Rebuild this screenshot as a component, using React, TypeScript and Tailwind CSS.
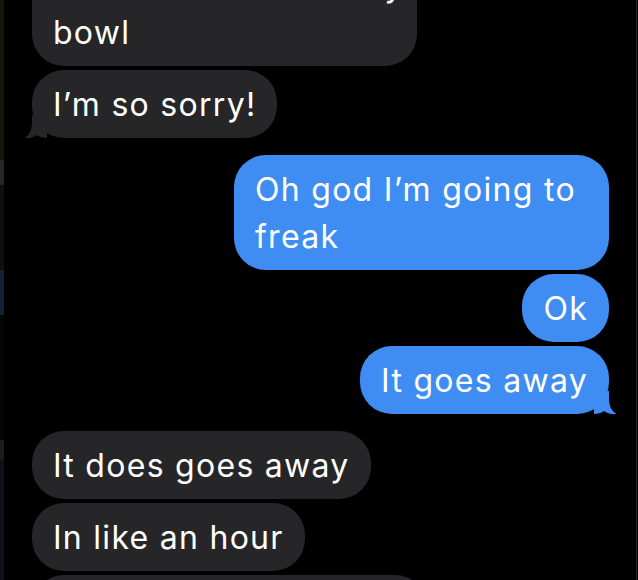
import type { ReactNode } from 'react'

type Side = 'in' | 'out'

interface Msg {
  side: Side
  text: ReactNode
  tail?: boolean
  width?: string
}

const messages: Msg[] = [
  {
    side: 'in',
    text: <><span className="whitespace-nowrap">Mine did that with my</span><br />bowl</>,
    width: 'w-[385px] max-w-none',
  },
  { side: 'in', text: 'I’m so sorry!', tail: true },
  { side: 'out', text: 'Oh god I’m going to freak' },
  { side: 'out', text: 'Ok' },
  { side: 'out', text: 'It goes away', tail: true },
  { side: 'in', text: 'It does goes away' },
  { side: 'in', text: 'In like an hour' },
  { side: 'in', text: 'Sometimes a bit longer', width: 'w-[395px] max-w-none' },
]

function Tail({ side }: { side: Side }) {
  const fill = side === 'out' ? '#3f8df3' : '#262628'
  return (
    <svg
      width="24"
      height="24"
      viewBox="0 0 24 24"
      className={
        side === 'out'
          ? 'absolute -right-[9px] bottom-[-1px]'
          : 'absolute -left-[9px] bottom-[-1px] -scale-x-100'
      }
    >
      <path
        d="M0 0 L15 0 L15 7 C15 15 17.5 20 22.5 23 C17.5 23.6 13 22.4 10 20 C7.5 22 4 23 0 23 Z"
        fill={fill}
      />
    </svg>
  )
}

function Bubble({ msg }: { msg: Msg }) {
  const out = msg.side === 'out'
  return (
    <div
      className={`relative ${out ? 'self-end' : 'self-start'} ${msg.tail ? 'mb-[13px]' : ''}`}
    >
      <div
        className={`relative z-10 max-w-[375px] rounded-[32px] px-[21px] py-[10.5px] text-[32px] leading-[47px] tracking-[0.04em] text-white ${
          out ? 'bg-[#3f8df3]' : 'bg-[#262628]'
        } ${msg.width ?? ''}`}
      >
        {msg.text}
      </div>
      {msg.tail && <Tail side={msg.side} />}
    </div>
  )
}

export default function App() {
  return (
    <div className="flex h-[580px] w-[638px] overflow-hidden bg-black font-['Inter','Liberation_Sans',sans-serif] antialiased">
      {/* sliver of the app behind, on the left edge */}
      <div className="flex w-[4px] shrink-0 flex-col">
        <div className="h-[160px] bg-[#17140c]" />
        <div className="h-[25px] bg-[#262626]" />
        <div className="h-[85px] bg-[#0e0e0e]" />
        <div className="h-[45px] bg-[#12223a]" />
        <div className="h-[125px] bg-[#050505]" />
        <div className="h-[20px] bg-[#1c1c1c]" />
        <div className="flex-1 bg-[#10101c]" />
      </div>

      <div className="min-w-0 flex-1">
        <div className="-mt-[49px] flex flex-col gap-[4px] pl-[28px] pr-[27px]">
          {messages.map((m, i) => (
            <Bubble key={i} msg={m} />
          ))}
        </div>
      </div>

      <div className="w-[1px] shrink-0 bg-[#2c2c2c]" />
      <div className="w-[1px] shrink-0 bg-black" />
    </div>
  )
}
